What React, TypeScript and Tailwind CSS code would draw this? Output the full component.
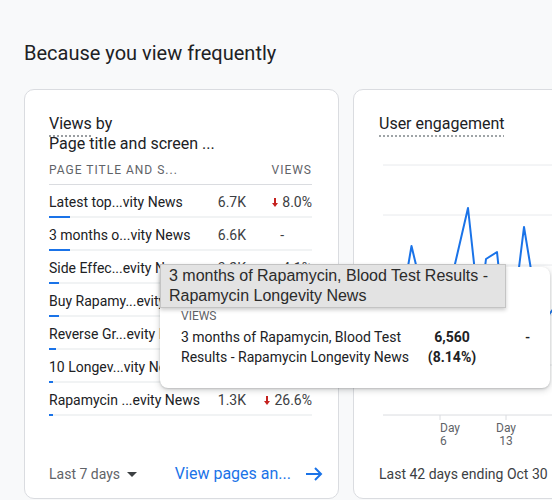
import React from 'react';

interface Row {
  label: string;
  value: string;
  change: string;
  down: boolean;
  bar: number;
}

const rows: Row[] = [
  { label: 'Latest top...vity News', value: '6.7K', change: '8.0%', down: true, bar: 21 },
  { label: '3 months o...vity News', value: '6.6K', change: '-', down: false, bar: 21 },
  { label: 'Side Effec...evity News', value: '3.2K', change: '4.1%', down: true, bar: 10 },
  { label: 'Buy Rapamy...evity News', value: '3.1K', change: '2.7%', down: true, bar: 10 },
  { label: 'Reverse Gr...evity News', value: '2.3K', change: '-', down: false, bar: 7 },
  { label: '10 Longev...vity News', value: '1.4K', change: '-', down: false, bar: 4 },
  { label: 'Rapamycin ...evity News', value: '1.3K', change: '26.6%', down: true, bar: 4 },
];

const linePoints: [number, number][] = [
  [4, 190], [16, 205], [25, 150], [32.5, 106], [43, 150], [51, 190], [57, 178], [63, 180],
  [89, 68], [99, 160], [102, 160], [107, 119], [118, 112], [123, 160], [131, 180], [136, 160],
  [145, 87], [157, 160], [166, 180], [181, 160], [200, 175],
];

function DownArrow() {
  return (
    <svg width="6" height="9" viewBox="0 0 6 9" className="shrink-0">
      <path d="M2 0h2v5h2L3 9 0 5h2z" fill="#c5221f" />
    </svg>
  );
}

function ViewsCard() {
  return (
    <div className="flex h-[410px] w-[315px] shrink-0 flex-col rounded-[10px] border border-[#dadce0] bg-white pl-6 pr-[26px] pt-6 pb-3">
      <div className="text-[16px] leading-5 text-[#202124]">
        <span className="underline decoration-dotted decoration-[#80868b] underline-offset-[7px]">Views</span> by
        <div>Page title and screen ...</div>
      </div>
      <div className="mt-2 flex border-b border-[#dadce0] pb-[6px] text-[12px] leading-4 tracking-[1px] text-[#5f6368]">
        <span className="flex-1">PAGE TITLE AND S...</span>
        <span>VIEWS</span>
      </div>
      {rows.map((row) => (
        <div key={row.label} className="pt-[7px]">
          <div className="flex h-5 items-center text-[14px] leading-5">
            <span className="flex-1 text-[#202124]">{row.label}</span>
            <span className="w-[40px] text-right text-[#3c4043]">{row.value}</span>
            {row.down ? (
              <span className="flex w-[66px] items-center justify-end gap-1 text-[#3c4043]">
                <DownArrow />
                {row.change}
              </span>
            ) : (
              <span className="w-[66px] pr-[28px] text-right text-[#3c4043]">-</span>
            )}
          </div>
          <div className="mt-1 h-[2px] bg-[#f1f3f4]">
            <div className="h-[2px] bg-[#1a73e8]" style={{ width: row.bar }} />
          </div>
        </div>
      ))}
      <div className="-mr-[11px] mt-auto flex h-6 items-center text-[14px]">
        <span className="text-[#5f6368]">Last 7 days</span>
        <svg width="10" height="5" viewBox="0 0 10 5" className="ml-[7px]">
          <path d="M0 0h10L5 5z" fill="#3c4043" />
        </svg>
        <span className="ml-auto text-[16px] text-[#1a73e8]">View pages an...</span>
        <svg width="18" height="18" viewBox="0 0 18 18" className="ml-[14px]">
          <path d="M1 9h15M10 3l6 6-6 6" fill="none" stroke="#1a73e8" strokeWidth="2" />
        </svg>
      </div>
    </div>
  );
}

function EngagementCard() {
  const grid = [25, 75, 125, 175, 225];
  return (
    <div className="flex h-[410px] w-[315px] shrink-0 flex-col rounded-[10px] border border-[#dadce0] bg-white pl-[25px] pt-6 pb-3">
      <div className="text-[16px] leading-5 text-[#202124]">
        <span className="underline decoration-dotted decoration-[#80868b] underline-offset-[7px]">User engagement</span>
      </div>
      <svg width="240" height="310" viewBox="0 0 240 310" className="mt-[6px] block">
        {grid.map((y) => (
          <line key={y} x1="4" x2="240" y1={y} y2={y} stroke="#e8eaed" strokeWidth="1" />
        ))}
        <line x1="4" x2="240" y1="275" y2="275" stroke="#dadce0" strokeWidth="1" />
        <line x1="61" x2="61" y1="275" y2="280" stroke="#dadce0" strokeWidth="1" />
        <line x1="127" x2="127" y1="275" y2="280" stroke="#dadce0" strokeWidth="1" />
        <polyline
          points={linePoints.map((p) => p.join(',')).join(' ')}
          fill="none"
          stroke="#1a73e8"
          strokeWidth="2"
          strokeLinejoin="round"
        />
        <g fontFamily="Roboto, sans-serif" fontSize="12" fill="#5f6368">
          <text x="61" y="292">Day</text>
          <text x="61" y="305">6</text>
          <text x="127" y="292" textAnchor="middle">Day</text>
          <text x="127" y="305" textAnchor="middle">13</text>
        </g>
      </svg>
      <div className="mt-auto flex h-6 items-center text-[14px] text-[#3c4043]">Last 42 days ending Oct 30</div>
    </div>
  );
}

export default function App() {
  return (
    <div className="relative h-[500px] w-[552px] overflow-hidden bg-[#f8f9fa] font-['Roboto',sans-serif]">
      <h2 className="pl-6 pt-[39px] text-[20px] leading-7 text-[#202124]">Because you view frequently</h2>
      <div className="mt-[22px] flex gap-[14px] pl-6">
        <ViewsCard />
        <EngagementCard />
      </div>

      <div className="absolute left-[160px] top-[267px] h-[121px] w-[390px] rounded-lg bg-white pl-[21px] pt-[41px] shadow-[0_2px_6px_rgba(60,64,67,0.25),0_1px_2px_rgba(60,64,67,0.2)]">
        <div className="text-[12px] leading-4 text-[#5f6368]">VIEWS</div>
        <div className="mt-[3px] flex text-[14px] leading-5 text-[#202124]">
          <div className="w-[234px]">3 months of Rapamycin, Blood Test Results - Rapamycin Longevity News</div>
          <div className="w-[74px] text-center font-bold">
            <div>6,560</div>
            <div>(8.14%)</div>
          </div>
          <div className="w-[41px] text-right font-medium">-</div>
        </div>
      </div>

      <div className="absolute left-[160px] top-[264px] w-[346px] border border-[#c4c4c4] bg-[#e3e3e3] px-2 py-[1px] font-['Liberation_Sans',sans-serif] text-[16px] leading-5 text-[#2b2b2b] shadow-[0_2px_4px_rgba(0,0,0,0.2)]">
        3 months of Rapamycin, Blood Test Results - Rapamycin Longevity News
      </div>
    </div>
  );
}
